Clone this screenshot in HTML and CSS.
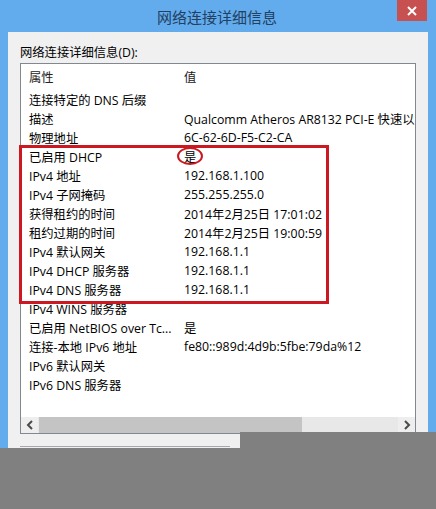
FILE: index.html
```html
<!DOCTYPE html>
<html lang="zh-CN">
<head>
<meta charset="utf-8">
<title>网络连接详细信息</title>
<link rel="stylesheet" href="styles.css">
</head>
<body>
<div class="window">
  <div class="titlebar">
    <span class="title">网络连接详细信息</span>
    <div class="close"><svg width="10" height="10" viewBox="0 0 10 10"><path d="M1 1L9 9M9 1L1 9" stroke="#fff" stroke-width="2"/></svg></div>
  </div>
  <div class="client">
    <div class="label">网络连接详细信息(D):</div>
    <div class="listbox">
      <div class="rows">
        <div class="row header"><span class="c1">属性</span><span class="c2">值</span></div>
        <div class="row"><span class="c1">连接特定的 DNS 后缀</span><span class="c2"></span></div>
        <div class="row"><span class="c1">描述</span><span class="c2">Qualcomm Atheros AR8132 PCI-E 快速以太网控制器 (NDIS 6.30)</span></div>
        <div class="row"><span class="c1">物理地址</span><span class="c2">6C-62-6D-F5-C2-CA</span></div>
        <div class="row"><span class="c1">已启用 DHCP</span><span class="c2">是</span></div>
        <div class="row"><span class="c1">IPv4 地址</span><span class="c2">192.168.1.100</span></div>
        <div class="row"><span class="c1">IPv4 子网掩码</span><span class="c2">255.255.255.0</span></div>
        <div class="row"><span class="c1">获得租约的时间</span><span class="c2">2014年2月25日 17:01:02</span></div>
        <div class="row"><span class="c1">租约过期的时间</span><span class="c2">2014年2月25日 19:00:59</span></div>
        <div class="row"><span class="c1">IPv4 默认网关</span><span class="c2">192.168.1.1</span></div>
        <div class="row"><span class="c1">IPv4 DHCP 服务器</span><span class="c2">192.168.1.1</span></div>
        <div class="row"><span class="c1">IPv4 DNS 服务器</span><span class="c2">192.168.1.1</span></div>
        <div class="row"><span class="c1">IPv4 WINS 服务器</span><span class="c2"></span></div>
        <div class="row"><span class="c1">已启用 NetBIOS over Tc...</span><span class="c2">是</span></div>
        <div class="row"><span class="c1">连接-本地 IPv6 地址</span><span class="c2">fe80::989d:4d9b:5fbe:79da%12</span></div>
        <div class="row"><span class="c1">IPv6 默认网关</span><span class="c2"></span></div>
        <div class="row"><span class="c1">IPv6 DNS 服务器</span><span class="c2"></span></div>
      </div>
      <div class="hscroll">
        <div class="arrow"><svg width="8" height="10" viewBox="0 0 8 10"><path d="M6 1L2 5L6 9" fill="none" stroke="#4a4a4a" stroke-width="2"/></svg></div>
        <div class="track"><div class="thumb"></div></div>
        <div class="arrow"><svg width="8" height="10" viewBox="0 0 8 10"><path d="M2 1L6 5L2 9" fill="none" stroke="#4a4a4a" stroke-width="2"/></svg></div>
      </div>
    </div>
    <div class="bottomline"></div>
  </div>
  <div class="mark-rect"></div>
  <div class="mark-ellipse"></div>
  <div class="cover"></div>
</div>
</body>
</html>
```
FILE: styles.css
```css
html, body {
  margin: 0;
  padding: 0;
  background: #808080;
}
body {
  width: 436px;
  height: 509px;
  overflow: hidden;
  font-family: "Open Sans", "Noto Sans CJK SC", sans-serif;
  font-size: 12.3px;
  color: #000;
}
.window {
  position: relative;
  width: 436px;
  height: 448px;
  background: #62acee;
  display: flex;
  flex-direction: column;
}
.titlebar {
  position: relative;
  height: 32px;
  flex: none;
  display: flex;
  align-items: center;
  justify-content: center;
}
.title {
  font-family: "Noto Sans CJK SC", sans-serif;
  font-size: 15px;
  color: #22405f;
  margin-left: -2px;
}
.close {
  position: absolute;
  left: 397px;
  top: 0;
  width: 30px;
  height: 21px;
  background: #c75050;
  display: flex;
  align-items: center;
  justify-content: center;
}
.client {
  flex: 1;
  margin: 0 8px;
  background: #f0f0f0;
  padding: 13px 0 0 12px;
  display: flex;
  flex-direction: column;
}
.label {
  height: 18px;
  line-height: 16px;
  flex: none;
}
.listbox {
  width: 394px;
  height: 369px;
  flex: none;
  border: 1px solid #828790;
  background: #fff;
  display: grid;
  grid-template-rows: 353px 16px;
}
.rows {
  overflow: hidden;
}
.row {
  height: 19px;
  display: flex;
  align-items: center;
  white-space: nowrap;
  overflow: hidden;
}
.row.header {
  height: 26px;
  color: #222;
}
.c1 {
  width: 155px;
  padding-left: 8px;
  flex: none;
  overflow: hidden;
}
.c2 {
  flex: none;
}
.hscroll {
  display: grid;
  grid-template-columns: 17px 1fr 17px;
  background: #e8e8e8;
}
.arrow {
  display: flex;
  align-items: center;
  justify-content: center;
  background: #eeeeee;
}
.arrow svg {
  display: block;
}
.track {
  padding-left: 1px;
}
.thumb {
  width: 263px;
  height: 16px;
  background: #c4c4c4;
}
.bottomline {
  margin-top: 12px;
  width: 210px;
  border-top: 1px solid #a8a8a8;
}
.mark-rect {
  position: absolute;
  left: 19px;
  top: 145px;
  width: 304px;
  height: 153px;
  border: 3px solid #cc1820;
}
.mark-ellipse {
  position: absolute;
  left: 177px;
  top: 147px;
  width: 22px;
  height: 14px;
  border: 2.5px solid #cc1820;
  border-radius: 50%;
}
.cover {
  position: absolute;
  left: 240px;
  top: 432px;
  width: 196px;
  height: 16px;
  background: #808080;
}
```
